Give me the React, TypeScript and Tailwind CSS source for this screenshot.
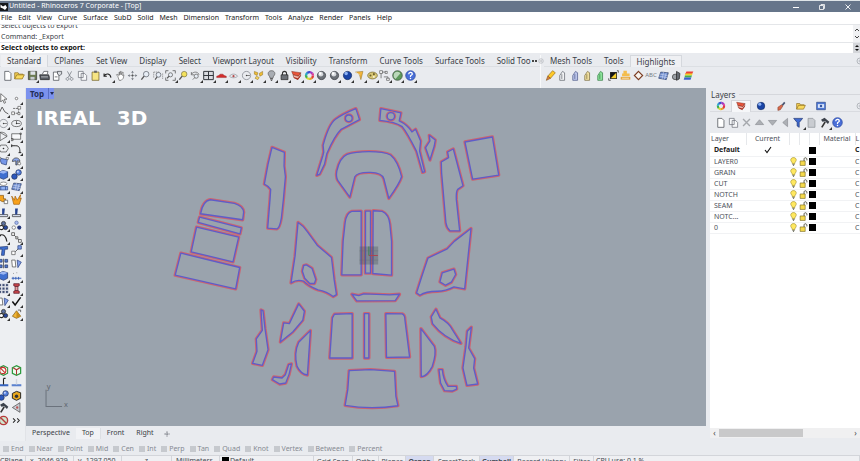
import React, { useState } from 'react';

const ink = '#3d4148';
const blue = '#3f6fd0';

const icons: Record<string, React.ReactNode> = {
    page: <path d="M4 2h6l3 3v10H4z" fill="#fff" stroke={ink} />,
    folder: <><path d="M1 13V4h5l1 2h6v3" fill="#f3cf55" stroke="#8a6a1c" /><path d="M1 13l3-6h11l-3 6z" fill="#f8d95e" stroke="#8a6a1c" /></>,
    save: <><path d="M2 2h12v12H2z" fill="#6c7b52" stroke="#333" /><path d="M5 2h7v5H5z" fill="#dfe3e8" /><path d="M5 10h6v4H5z" fill="#c7cbd0" /></>,
    print: <><path d="M5 6l2-4h6l-1 4" fill="#fff" stroke={ink} /><path d="M1 7h13l1 3v4H2z" fill="#555b63" stroke="#222" /><path d="M3 10h10" stroke="#ddd" /></>,
    notes: <><path d="M2 3h8v12H2z" fill="#fff" stroke={ink} /><path d="M8 2h6v4l-3 2-3-2z" fill="#d8dbe0" stroke={ink} /><path d="M4 10h4" stroke={ink} /></>,
    cut: <path d="M5 2l5 9M11 2l-5 9M5 11a2 2 0 1 0 .1 0M11 11a2 2 0 1 0 .1 0" fill="none" stroke="#6b7078" />,
    copy: <path d="M2 2h7v9H2zM6 5h5l3 3v7H6z" fill="#f7f8fa" stroke="#666b73" />,
    paste: <><path d="M3 3h10v12H3z" fill="#f6e584" stroke="#6a5a20" /><path d="M6 1h4v3H6z" fill="#666" /></>,
    undo: <path d="M3 5v4h4M3 9c3-5 9-4 10 2" fill="none" stroke="#222" strokeWidth="1.6" />,
    hand: <path d="M4 9L2 7l1-1 3 2V3h1v4l1-5h1v5l2-4 1 .5L11 8l2-1-1 5-3 3H6z" fill="#fff" stroke="#555" strokeWidth=".9" />,
    orbit: <><path d="M8 2v12M2 8h12" stroke="#a5a9af" /><path d="M6 4l2-3 2 3M6 12l2 3 2-3M4 6L1 8l3 2M12 6l3 2-3 2" fill="#777c84" /><circle cx="8" cy="8" r="1.5" fill="#555" /></>,
    zoom: <><circle cx="9" cy="6" r="4" fill="#e7edf5" stroke="#555b63" /><path d="M6 9l-4 5" stroke="#555" strokeWidth="2" /></>,
    zoomWin: <><path d="M1 3h9M1 3v9M14 5v8" stroke="#777" strokeDasharray="2 1" /><circle cx="8" cy="7" r="3.5" fill="#e7edf5" stroke="#555b63" /><path d="M6 10l-3 4" stroke="#555" strokeWidth="1.6" /></>,
    zoomExt: <><path d="M1 5V1h4M11 1h4v4M15 11v4h-4M5 15H1v-4" fill="none" stroke="#444" /><circle cx="8" cy="7" r="3" fill="#e7edf5" stroke="#555" /><path d="M6 9l-3 3" stroke="#555" strokeWidth="1.6" /></>,
    zoomSel: <><circle cx="9" cy="6" r="4" fill="#f4e25d" stroke="#777040" /><path d="M6 9l-4 5" stroke="#555" strokeWidth="2" /></>,
    zoomBack: <><path d="M2 3v4h4M2 6c3-4 10-4 11 1" fill="none" stroke="#555" /><circle cx="9" cy="9" r="3" fill="#e7edf5" stroke="#555" /><path d="M7 11l-3 3" stroke="#555" /></>,
    grid: <path d="M1 2h14v12H1zM8 2v12M1 8h14" fill="#d9dce1" stroke="#2e3238" strokeWidth="1.4" />,
    car: <path d="M1 9l3-1 2-2h4l2 2 3 1v2H1z" fill="#d22c2c" stroke="#8d1f1f" strokeWidth=".6" />,
    target: <><path d="M2 9c3-4 9-4 12 0-3 3-9 3-12 0z" fill="none" stroke="#8a8f97" /><circle cx="8" cy="9" r="1.6" fill="#b34b4b" /></>,
    circle: <><circle cx="8" cy="8" r="6" fill="none" stroke="#777c84" /><path d="M8 8h5" stroke="#555" /><circle cx="8" cy="8" r="1" fill="#444" /></>,
    objects: <><path d="M2 2l5 2-1 4-4-2zM9 5l5-3v5l-4 2z" fill="#eebd36" stroke="#8a6a1c" strokeWidth=".7" /><path d="M5 9l4 2-2 3-4-2z" fill="#f4d561" stroke="#8a6a1c" strokeWidth=".7" /></>,
    bulb: <><path d="M5 9C1 5 4 1 8 1s7 4 3 8l-1 3H6z" fill="#a9adb3" stroke="#555" /><path d="M6 13h4M7 15h2" stroke="#333" strokeWidth="1.4" /></>,
    bulbOn: <><path d="M5 9C1 5 4 1 8 1s7 4 3 8l-1 3H6z" fill="#ffe860" stroke="#93821e" /><path d="M6 13h4M7 15h2" stroke="#554" strokeWidth="1.4" /></>,
    lock: <><path d="M5 8V5c0-4 6-4 6 0v3" fill="none" stroke="#333" strokeWidth="1.5" /><path d="M3 7h10v7H3z" fill="#6c7178" stroke="#222" /></>,
    unlock: <><path d="M9 8V4c0-4 5-3 5 0v2" fill="none" stroke="#3c3c2a" strokeWidth="1.5" /><path d="M2 7h9v8H2z" fill="#f5d94c" stroke="#6b5c17" /></>,
    layers: <><path d="M1 2l13 2-3 5-8-2z" fill="#e8543a" stroke="#7d2a1e" strokeWidth=".7" /><path d="M3 7l8 2 3-5v4l-4 6-6-3z" fill="#f3b5a8" stroke="#7d2a1e" strokeWidth=".8" /><path d="M4 10l6 2 4-5v2l-4 5-5-2z" fill="#a82e20" /></>,
    sphere: <><circle cx="8" cy="8" r="6" fill="#6b7077" stroke="#34383d" /><circle cx="7" cy="6" r="3.5" fill="#d6d9dd" /><circle cx="6" cy="5" r="1.8" fill="#fff" /></>,
    blueSphere: <><circle cx="8" cy="8" r="6" fill="#1944a6" stroke="#122a60" /><circle cx="6" cy="5" r="2.5" fill="#8cb2f4" /></>,
    cone: <><path d="M2 3l11-1-3 12-2-7z" fill="#f2b43c" stroke="#8a6a1c" strokeWidth=".7" /><path d="M2 3l6 4" stroke="#fff" /></>,
    gears: <><ellipse cx="8" cy="8" rx="7" ry="5" fill="#d9c876" stroke="#6f602a" /><circle cx="5" cy="8" r="1.5" fill="#6f602a" /><circle cx="10" cy="6" r="1.5" fill="#6f602a" /><circle cx="10" cy="10" r="1.2" fill="#fff" /></>,
    points: <><path d="M3 12V3h7M7 10h6v4" fill="none" stroke="#555" /><path d="M1 1h4v4H1zM9 2h3v3H9zM11 12h4v3h-4z" fill="#fff" stroke="#333" strokeWidth=".8" /></>,
    greenBall: <><circle cx="8" cy="8" r="7" fill="#5f9a5b" stroke="#3b4b3d" /><path d="M3 5c4-4 8-2 9 0L5 13C2 11 2 8 3 5z" fill="#bcd8ba" /></>,
    help: <><circle cx="8" cy="8" r="7" fill="#4a6fd8" stroke="#27459c" /><path d="M5.5 6c0-4 6-3 5 .5L8 8.500V10" fill="none" stroke="#fff" strokeWidth="1.8" /><circle cx="8" cy="12.5" r="1.1" fill="#fff" /></>,
    pencil: <><path d="M4 9l7-8 4 3-7 8z" fill="#ffc928" stroke="#99701a" /><path d="M4 9l4 3-6 3z" fill="#e8863a" stroke="#87551e" /></>,
    cutGrey: <path d="M4 15V8l4-6 3 2v11zM7 6v7" fill="#f1f2f4" stroke="#5a5f67" />,
    cutBlue: <path d="M4 15V8l4-6 3 2v11zM7 6v7" fill="#bcc6ea" stroke="#4a5688" />,
    cutGold: <path d="M4 15V8l4-6 3 2v11zM7 6v7" fill="#f0dfa0" stroke="#75683a" />,
    cutGreen: <path d="M4 15V8l4-6 3 2v11zM7 6v7" fill="#8be29a" stroke="#2f7b3f" />,
    contrast: <><path d="M3 3h10v10H3z" fill="#151515" /><path d="M12 4v8H4z" fill="#f6cf2c" /><path d="M13 1h2v3M1 12v3h3" fill="none" stroke="#333" /></>,
    stamp: <><path d="M5 1h5v4h4v4H3V5h2z" fill="#f4bd4d" /><path d="M1 10h14v4H1z" fill="#e5a63f" /><path d="M3 12h10" stroke="#fff2cd" /></>,
    diamond: <path d="M8 2l6 6-6 6-6-6z" fill="#f8f4ef" stroke="#7c3d22" strokeWidth="1.7" />,
    mesh: <><path d="M4 3l11 1-3 10-11-2z" fill="#6c8bce" stroke="#34456e" /><path d="M8 3L6 13M12 4L9 14M3 6l11 2M2 9l11 2" stroke="#d4def5" strokeWidth=".8" /></>,
    cluster: <><circle cx="6" cy="10" r="4" fill="#9a9fa5" stroke="#333" /><path d="M8 2l5 3-1 8-4 2z" fill="#666b72" stroke="#222" /></>,
    rainbow: <><path d="M5 2h10l-2 4H3z" fill="#ee4136" /><path d="M4 5h10l-1 3H2z" fill="#f4d22e" /><path d="M3 8h10l-1 3H2z" fill="#45b14e" /><path d="M2 11h10l-1 3H1z" fill="#3c60cf" /></>,
    arrow: <path d="M4 1v12l3-3 2 5 2-1-2-5h4z" fill="#fff" stroke="#444" />,
    dot: <circle cx="8" cy="8" r="1.8" fill="#fff" stroke="#555" />,
    polyline: <path d="M1 13L6 3l4 7 5 3" fill="none" stroke="#444" strokeWidth="1.2" />,
    curve: <><path d="M3 12h8V5M3 5h8" fill="none" stroke="#444" strokeDasharray="3 1" /><path d="M1 10h4v4H1zM10 2h4v4h-4zM10 11h3v3h-3z" fill="#fff" stroke="#333" strokeWidth=".8" /></>,
    ellipse: <><ellipse cx="8" cy="8" rx="7" ry="4.5" fill="none" stroke="#444" /><path d="M8 4v4h5" fill="none" stroke="#444" /><circle cx="8" cy="8" r="1" fill="#333" /></>,
    arc: <path d="M3 2l10 6-10 6zM3 2c5-1 10 2 10 6" fill="none" stroke="#444" />,
    rect: <path d="M1 4h13v8H1zM0 11h3v3H0zM13 3h2v2h-2z" fill="#f8f9fb" stroke="#444" />,
    hexagon: <><path d="M4 3h8l3 5-3 5H4L1 8z" fill="none" stroke="#444" /><circle cx="8" cy="8" r="1.2" fill="#333" /></>,
    fillet: <path d="M1 4h6c5 0 6 3 6 10M1 2v4M11 14h4" fill="none" stroke="#222" strokeWidth="1.4" />,
    patch: <><path d="M2 3l10 2 2-2-2 10-7-2z" fill="#7697e8" stroke="#263a72" /><path d="M1 2h3v3H1zM12 2h3v3h-3z" fill="#fff" stroke="#333" strokeWidth=".7" /></>,
    dome: <><path d="M2 8c0-7 11-7 11 0l-4-1v6H7V7z" fill="#8aa6ec" stroke="#333" /><circle cx="12" cy="11" r="2" fill="#fff" stroke="#555" /></>,
    box: <><path d="M1 5l6-3 7 2v8l-6 3-7-3z" fill={blue} stroke="#1e3166" /><path d="M1 5l7 2 6-3-7-2z" fill="#9bb6f3" /></>,
    balls: <><circle cx="5" cy="11" r="4" fill="#2d58bd" stroke="#1b2d5b" /><circle cx="11" cy="5" r="4" fill="#5580df" stroke="#1b2d5b" /><circle cx="10" cy="4" r="1.5" fill="#c5d5fa" /></>,
    extrude: <><ellipse cx="8" cy="4" rx="5" ry="2.5" fill="#fff" stroke="#666" /><path d="M1 8h13v5H1z" fill="#8fb2f4" stroke="#2c4788" /><path d="M4 8v5M11 8v5" stroke="#2c4788" /></>,
    puzzle: <><path d="M2 2h6v5h3v4H6L1 8z" fill="#f6a41f" stroke="#84550c" /><path d="M9 9h5v5H9z" fill="#fff" stroke="#555" /></>,
    flame: <path d="M1 3l4 6 1-6 3 6 5-8-1 6 2-1-3 9H4z" fill="#f8a11c" stroke="#a5610a" />,
    trim: <><path d="M2 11h12v3H2z" fill="#dbe2f3" stroke="#333" /><path d="M6 2h4l-1 9H6z" fill="#27448f" /></>,
    group: <><circle cx="5" cy="11" r="3" fill="#fff" stroke="#222" strokeWidth="1.5" /><circle cx="11" cy="11" r="3" fill="#28479c" stroke="#222" /><circle cx="8" cy="5" r="3" fill="#5d719e" stroke="#222" /></>,
    dots3: <><circle cx="8" cy="4" r="2.5" fill="#a7baf0" stroke="#5b6da3" /><circle cx="4" cy="11" r="2.5" fill="#fff" stroke="#666" /><circle cx="12" cy="11" r="3" fill="#23367c" /></>,
    bend: <path d="M2 5c6-3 10 2 11 9M1 3l3 3" fill="none" stroke="#222" strokeWidth="1.6" />,
    nodes: <><path d="M3 3l9 9" stroke="#333" /><path d="M1 1h4v4H1zM7 7h3v3H7zM11 11h4v4h-4z" fill="#fff" stroke="#333" /></>,
    text: <path d="M2 3l12-1v4h-4l-1 9H5l1-9H2z" fill={blue} stroke="#21376f" />,
    move: <><path d="M6 10l5-5" stroke="#333" /><path d="M1 9h5v5H1z" fill="#fff" stroke="#555" /><path d="M10 1h5v5h-5z" fill="#7e9ce6" stroke="#26407f" /></>,
    array: <><path d="M2 2h4v4H2zM10 2h4v4h-4zM2 10h4v4H2zM10 10h4v4h-4z" fill="#5379cf" stroke="#223462" /><path d="M8 1v14" stroke="#333" /></>,
    mirror: <><path d="M1 3h5l1 10H2z" fill="#fff" stroke="#444" /><path d="M9 3l6 3-5 8z" fill="#7f9ee8" stroke="#2b4280" /></>,
    ruler: <><path d="M1 12h14M3 10v4M7 10v4M11 10v4" stroke="#3760b8" strokeWidth="1.4" /><path d="M3 5h1M8 4h1" stroke="#555" /></>,
    matrix: <path d="M1 1h4v4H1zM6 1h4v4H6zM11 1h4v4h-4zM1 6h4v4H1zM6 6h4v4H6zM11 6h4v4h-4zM1 11h4v4H1zM6 11h4v4H6zM11 11h4v4h-4z" fill="#3b4a70" stroke="#fff" strokeWidth=".7" />,
    spool: <><path d="M4 1h8v3l-2 1H6L4 4zM4 15h8v-3l-2-1H6l-2 1z" fill="#c9474b" stroke="#512" /><path d="M6 5h4v6H6z" fill="#e6a7a7" stroke="#512" /></>,
    check: <path d="M2 8l4 5 8-11" fill="none" stroke="#111" strokeWidth="2.2" />,
    pyramid: <><path d="M2 12l6-8 6 8-6 3z" fill="#f1b638" stroke="#77530d" /><path d="M8 4l6 8-6 3z" fill="#c98c18" /><path d="M10 3h4v3" fill="none" stroke="#333" /></>,
    cubeRed: <><path d="M2 4l6-3 6 3v8l-6 3-6-3z" fill="#f4fff4" stroke="#2d8f3c" strokeWidth="1.5" /><circle cx="7" cy="8" r="4.5" fill="none" stroke="#c72f2f" strokeWidth="1.6" /><path d="M4 5l6 6" stroke="#c72f2f" strokeWidth="1.6" /></>,
    cubeGreen: <><path d="M2 4l6-3 6 3v8l-6 3-6-3z" fill="#eefaee" stroke="#2d9a3f" strokeWidth="1.8" /><path d="M3 4l5 3 5-3M8 7v7" fill="none" stroke="#a33" strokeWidth="1.5" /></>,
    slab: <><path d="M1 12h14" stroke="#3764c0" strokeWidth="3" /><path d="M8 2v9M8 2h3" fill="none" stroke="#222" strokeWidth="1.6" /></>,
    slabPale: <><path d="M1 12h14" stroke="#5c82cf" strokeWidth="3" /><path d="M7 3h2v8H7z" fill="#cfd5df" /></>,
    goldBox: <><path d="M2 5l6-3 6 2v8l-6 3-6-3z" fill="#e9a81f" stroke="#222" strokeWidth="1.4" /><circle cx="8" cy="9" r="2.5" fill="#333" /></>,
    prev: <><path d="M13 1v14L2 8z" fill="#c8ccd3" stroke="#444" /><circle cx="9" cy="8" r="1.7" fill="#b55" /></>,
    noEntry: <><circle cx="8" cy="8" r="6" fill="#cfe6cf" stroke="#b63b3b" strokeWidth="2" /><path d="M4 4l8 8" stroke="#b63b3b" strokeWidth="2" /></>,
    brush: <><path d="M9 6l4-5 2 2-4 5z" fill="#4a5570" /><path d="M3 10l6-4 2 2-4 6-4 1z" fill="#d86a4c" stroke="#7c3b2a" strokeWidth=".8" /></>,
    display: <><path d="M1 2h14v12H1z" fill="#4d78d6" stroke="#26427f" /><path d="M3 5h10v6H3z" fill="#dbe6fb" /><circle cx="8" cy="8" r="2" fill="#35569f" /></>,
    cross: <path d="M3 3l10 10M13 3L3 13" stroke="#a5a8ad" strokeWidth="2" />,
    up: <path d="M2 11h12L8 4z" fill="#adb0b5" stroke="#8c8f94" />,
    down: <path d="M2 5h12l-6 7z" fill="#adb0b5" stroke="#8c8f94" />,
    left: <path d="M11 2v12L4 8z" fill="#adb0b5" stroke="#8c8f94" />,
    filter: <path d="M1 2h13L9 8v7l-3-2V8z" fill="#3f6ad0" stroke="#1e3473" />,
    pageGrey: <path d="M3 2h7l3 3v10H3z" fill="#c9ccd1" stroke="#8b8f95" />,
    hammer: <><path d="M4 15l5-8" stroke="#333" strokeWidth="2.4" /><path d="M3 4l5-3 7 6-2 3-4-4-4 1z" fill="#3c424b" /></>,
    gear: <><circle cx="8" cy="8" r="6" fill="none" stroke="#aeb2b8" strokeWidth="1.8" /><circle cx="8" cy="8" r="2" fill="none" stroke="#aeb2b8" strokeWidth="1.5" /></>,
    plus: <path d="M8 1v14M1 8h14" stroke="#6d727a" strokeWidth="2.4" strokeDasharray="5 1" />,
    more: <path d="M3 5l3 3-3 3M9 5l3 3-3 3" fill="none" stroke="#222" strokeWidth="1.5" />,
};

interface IconProps {
    name: string;
    className?: string;
}

const Icon: React.FC<IconProps> = ({ name, className = 'size-[11px]' }) => {
    if (name === 'wheel') {
        return (
            <svg viewBox="0 0 16 16" className={className} aria-hidden="true">
                {['#e23c3c', '#e99b2c', '#d9d936', '#3fb04a', '#2fa7c9', '#3a4fd0', '#a03cc4', '#dd3c94'].map((color, i) => (
                    <circle key={color} cx="8" cy="8" r="5" fill="none" stroke={color} strokeWidth="3.4" strokeDasharray="4.2 40" strokeDashoffset={-i * 3.93} />
                ))}
            </svg>
        );
    }
    return (
        <svg viewBox="0 0 16 16" className={className} aria-hidden="true">
            {icons[name]}
        </svg>
    );
};

interface ToolProps {
    name: string;
    flyout?: boolean;
}

const Tool: React.FC<ToolProps> = ({ name, flyout }) => (
    <button type="button" aria-label={name} className="relative size-3 shrink-0 flex items-center justify-center">
        <Icon name={name} />
        {flyout && (
            <svg viewBox="0 0 3 3" className="absolute -right-px -bottom-px size-[3px]" aria-hidden="true">
                <path d="M3 0v3H0z" fill="#333" />
            </svg>
        )}
    </button>
);

const menus = ['File', 'Edit', 'View', 'Curve', 'Surface', 'SubD', 'Solid', 'Mesh', 'Dimension', 'Transform', 'Tools', 'Analyze', 'Render', 'Panels', 'Help'];
const toolTabs = ['Standard', 'CPlanes', 'Set View', 'Display', 'Select', 'Viewport Layout', 'Visibility', 'Transform', 'Curve Tools', 'Surface Tools', 'Solid Too'];
const sideTabs = ['Mesh Tools', 'Tools', 'Highlights'];

const standardTools = ['page', 'folder', 'save+', 'print', 'notes', 'cut', 'copy', 'paste', 'undo+', 'hand', 'orbit', 'zoom', 'zoomWin', 'zoomExt+', 'zoomSel', 'zoomBack+', 'grid+', 'car+', 'target+', 'circle+', 'objects+', 'bulb+', 'lock+', 'layers+', 'wheel+', 'sphere', 'sphere+', 'blueSphere+', 'cone+', 'gears+', 'points+', 'greenBall+', 'help+'];
const sideTools = ['pencil', 'cutGrey', 'cutBlue', 'cutGold', 'cutGreen', 'contrast', 'stamp', 'diamond', 'ABC', 'mesh', 'cluster', 'rainbow'];

const leftTools = [
    ['arrow', 'dot+'], ['polyline+', 'curve+'], ['circle+', 'ellipse+'], ['arc+', 'rect+'], ['hexagon+', 'fillet+'], ['patch+', 'dome+'],
    ['box+', 'balls+'], ['extrude+', 'mesh+'], ['puzzle', 'flame'], ['trim+', 'trim'], ['group+', 'dots3'], ['bend+', 'nodes+'],
    ['text', 'move+'], ['array', 'mirror'], ['box+', 'ruler+'], ['matrix+', 'spool+'], ['mirror+', 'check+'], ['group+', 'pyramid+'],
];
const leftBottomTools = [['cubeRed', 'cubeGreen'], ['slab', 'slabPale'], ['balls', 'goldBox'], ['hammer', 'prev'], ['noEntry', 'more']];

const layers = ['Default', 'LAYER0', 'GRAIN', 'CUT', 'NOTCH', 'SEAM', 'NOTC...', '0'];
const snaps = ['End', 'Near', 'Point', 'Mid', 'Cen', 'Int', 'Perp', 'Tan', 'Quad', 'Knot', 'Vertex', 'Between', 'Percent'];

// Pattern pieces, three drawing units per screen pixel
const pieces = [
    {
        at: 'translate(402 3)',
        paths: [
            'M121 373C126 345 136 333 150 331L222 342Q248 350 250 368L247 391Z',
            'M118 383L243 415L239 433L114 399Z',
            'M109 413L235 443L218 517L93 487Z',
            'M62 491L238 534L226 598L45 557Z',
            'M335 174L372 189L371 230L375 262L369 330L363 385Q358 415 350 418L322 416L329 330L331 300Q322 288 312 284L323 225Z',
            'M413 399Q428 408 440 426L470 467L513 504L521 570L528 615L518 621Q500 606 473 601Q445 590 430 575Q410 568 392 580L404 500Z',
            'M430 528L438 526L455 537L466 570L462 582L448 582L433 566L426 545Z',
        ],
    },
    {
        at: 'translate(852 3)',
        paths: [
            'M136 58L147 91L92 120Q72 140 49 193L42 225L28 254L19 258L37 200L40 188L38 168Q55 105 75 90Q95 75 136 58Z',
            'M105 87a10 10 0 1 0 20 0a10 10 0 1 0-20 0Z',
            'M211 58L271 71L266 95Q290 106 304 128L315 120L330 155L327 185L342 247L336 249L318 186Q290 130 275 112Q255 97 208 93Z',
            'M230 81a11 11 0 1 0 22 0a11 11 0 1 0-22 0Z',
            'M356 138L374 152L371 170L358 212L345 175L358 155Z',
            'M428 179L457 289L441 300Q436 306 437 330L447 424L418 424Q408 415 406 400L393 250L392 218L414 205L411 188Z',
            'M463 158L545 143L564 257L486 269Z',
            'M110 195Q135 187 175 187Q220 187 240 197Q262 215 273 262Q268 280 235 327L220 268Q215 250 180 249Q140 248 133 262L118 323L82 273Q76 262 79 245Q88 205 110 195Z',
        ],
    },
    {
        at: 'translate(852 333)',
        paths: [
            'M124 36L152 35L152 226L94 226L98 125L104 70Q108 40 124 36Z',
            'M165 35L180 35L180 221L165 221Z',
            'M188 34L215 36Q235 45 238 75L243 125L243 227L187 222Z',
            'M124 284L145 288L160 283L237 286L267 284L254 303L139 304Z',
            'M481 87L462 268L430 262Q405 275 380 275Q345 275 328 287L318 280Q332 235 352 176L410 148L432 125Z',
            'M395 220L430 209L435 225L422 248L405 257L388 247Z',
        ],
    },
    {
        at: 'translate(612 603)',
        paths: [
            'M92 61L98 64L104 118L113 180L96 227L67 221L80 185L78 148L96 122Z',
            'M205 43L222 65L217 92L187 127L150 157L160 100L177 102Z',
            'M240 123L231 256Q212 254 200 230Q190 190 205 158Z',
            'M183 223Q178 255 166 280L148 283L126 270L130 262L155 265L165 255L175 225Z',
            'M312 74L365 72L365 205L298 205L306 85Z',
            'M402 72L415 72L415 205L402 205Z',
            'M466 72L515 73Q523 76 523 90L537 202L468 203Z',
            'M356 243L420 240L492 245L496 320L502 348Q420 360 344 347L352 300Z',
            'M616 59L628 85Q655 100 665 120L691 161Q640 145 606 102L602 82Z',
            'M571 117L611 170Q618 190 605 230Q590 260 572 261Z',
            'M722 113L714 175L732 207L729 235L741 283L709 287L697 235L706 170L710 125Z',
            'M625 240L635 240Q638 270 652 290L677 290L678 298L665 304L642 303L630 280Z',
        ],
    },
];

const renderTool = (entry: string, key: React.Key) => {
    if (entry === 'ABC') {
        return <button type="button" key={key} className="w-3 shrink-0 flex justify-center text-[6px] text-[#777c84]">ABC</button>;
    }
    return <Tool key={key} name={entry.replace('+', '')} flyout={entry.endsWith('+')} />;
};

const Viewport: React.FC = () => (
    <div className="relative flex-1 min-h-0 bg-[#9aa3ad] overflow-hidden">
        <svg viewBox="0 0 2037 1011" className="block size-full" aria-label="Flattened seat pattern">
            {pieces.map(group => (
                <g key={group.at} transform={group.at} strokeLinejoin="round">
                    {group.paths.map(d => (
                        <g key={d}>
                            <path d={d} fill="none" stroke="#cb6470" strokeWidth="10" />
                            <path d={d} fill="#9aa3ad" stroke="#5f5dc8" strokeWidth="4" />
                        </g>
                    ))}
                </g>
            ))}
            <g transform="translate(852 333)">
                <path d="M147 141h56v54h-56z" fill="#4b4f58" opacity=".35" />
                <path d="M147 154h56M147 182h56M161 141v54M189 141v54" stroke="#5f6670" strokeWidth="2" opacity=".4" />
                <path d="M175 168h27" stroke="#a84652" strokeWidth="3" />
                <path d="M175 141v27" stroke="#3f7f56" strokeWidth="3" />
            </g>
            <path d="M60 903v50h48" fill="none" stroke="#6b727c" strokeWidth="3" />
            <text x="62" y="902" className="text-[22px] fill-[#5f6670]">y</text>
            <text x="114" y="956" className="text-[22px] fill-[#5f6670]">x</text>
        </svg>
        <button type="button" className="absolute left-0 top-0 h-[11px] flex items-center bg-[#7b92ee] text-[8px] font-bold text-[#222c55]">
            <span className="px-1">Top</span>
            <span className="h-full w-[6px] flex items-center justify-center border-l border-[#5a6fc4]">
                <svg viewBox="0 0 4 3" className="w-1 h-[3px]" aria-hidden="true"><path d="M0 0h4L2 3z" fill="#222c55" /></svg>
            </span>
        </button>
        <div className="absolute left-[10px] top-5 flex gap-4 font-['DejaVu_Sans',sans-serif] text-[20px] leading-5 font-bold text-white">
            <span>IREAL</span>
            <span>3D</span>
        </div>
    </div>
);

const LayersPanel: React.FC = () => {
    const [current, setCurrent] = useState('Default');

    return (
        <section className="w-[154px] shrink-0 pl-1 pt-px pb-[3px] flex flex-col">
            <div className="h-[11px] flex items-center gap-1 pl-px">
                <h2 className="text-[8px]">Layers</h2>
                <span className="flex-1 border-t border-[#d5d7dc]"></span>
            </div>
            <div className="h-3 flex items-center pl-px border-b border-[#d9dbe0]">
                {['wheel', 'layers', 'blueSphere', 'brush', 'folder', 'display'].map(name => (
                    <button type="button" key={name} aria-label={name} className={`w-5 h-3 shrink-0 flex items-center justify-center ${name === 'layers' ? 'bg-[#f6f7f9] border-x border-t border-[#d5d7dc]' : ''}`}>
                        <Icon name={name} className="size-[10px]" />
                    </button>
                ))}
                <button type="button" aria-label="Panel options" className="ml-auto -mr-1"><Icon name="gear" className="size-2" /></button>
            </div>
            <div className="h-[21px] shrink-0 w-[134px] pl-1 flex items-center justify-between">
                {['page', 'copy', 'cross', 'up', 'down', 'left', 'filter+', 'pageGrey', 'hammer+', 'help'].map(renderTool)}
            </div>
            <div className="flex-1 min-h-0 bg-white overflow-hidden">
                <table className="w-full table-fixed border-collapse text-[7px] leading-[10px]">
                    <colgroup>
                        <col className="w-9" />
                        <col className="w-[43px]" />
                        <col className="w-[10px]" />
                        <col className="w-[10px]" />
                        <col className="w-[10px]" />
                        <col className="w-9" />
                        <col />
                    </colgroup>
                    <thead>
                        <tr className="h-3 text-[#4d5159]">
                            <th scope="col" className="font-normal text-left pl-px border-r border-[#e6e8eb]">Layer</th>
                            <th scope="col" className="font-normal border-r border-[#e6e8eb]">Current</th>
                            <th scope="col" aria-label="On" className="border-r border-[#e6e8eb]"></th>
                            <th scope="col" aria-label="Locked" className="border-r border-[#e6e8eb]"></th>
                            <th scope="col" aria-label="Color" className="border-r border-[#e6e8eb]"></th>
                            <th scope="col" className="font-normal border-r border-[#e6e8eb]">Material</th>
                            <th scope="col" className="font-normal text-left">L</th>
                        </tr>
                    </thead>
                    <tbody>
                        {layers.map(layer => (
                            <tr key={layer} onClick={() => setCurrent(layer)} className={`h-[11px] border-b border-[#f1f2f4] ${layer === current ? 'font-bold text-[#222]' : 'text-[#4d5159]'}`}>
                                <td className="pl-1 whitespace-nowrap">{layer}</td>
                                <td>{layer === current && <Icon name="check" className="size-2 mx-auto" />}</td>
                                <td>{layer !== current && <Icon name="bulbOn" className="size-[9px]" />}</td>
                                <td>{layer !== current && <Icon name="unlock" className="size-[9px]" />}</td>
                                <td><span className="block size-[7px] bg-black"></span></td>
                                <td></td>
                                <td>C</td>
                            </tr>
                        ))}
                    </tbody>
                </table>
            </div>
            <div className="h-[10px] shrink-0 flex items-center bg-[#f0f0f1] text-[8px] leading-[8px] text-[#444]">
                <button type="button" aria-label="Scroll left" className="w-[9px]">‹</button>
                <div className="flex-1 h-2">
                    <div className="h-full w-[64%] bg-[#c9c9ca]"></div>
                </div>
                <button type="button" aria-label="Scroll right" className="w-[9px]">›</button>
            </div>
        </section>
    );
};

const StatusBar: React.FC = () => (
    <footer className="h-[6px] shrink-0 overflow-hidden border-t border-[#d3d5da] bg-[#eff0f3]">
        <div className="flex h-3 text-[7px] leading-[10px] text-[#444850] whitespace-nowrap *:border-r *:border-[#d3d5da] *:shrink-0">
            <span className="w-[26px]">CPlane</span>
            <span className="w-12 pl-1">x -2046.929</span>
            <span className="w-12 pl-1">y -1297.050</span>
            <span className="w-[50px] text-center">z</span>
            <span className="w-12 pl-1">Millimeters</span>
            <span className="w-[94px] pl-[2px] flex gap-px"><span className="size-[7px] mt-px bg-black"></span>Default</span>
            <button type="button" className="w-[39px]">Grid Snap</button>
            <button type="button" className="w-[26px]">Ortho</button>
            <button type="button" className="w-[27px]">Planar</button>
            <button type="button" className="w-7 font-bold bg-[#d5daf0]">Osnap</button>
            <button type="button" className="w-[46px]">SmartTrack</button>
            <button type="button" className="w-[34px] font-bold bg-[#d5daf0]">Gumball</button>
            <button type="button" className="w-14">Record History</button>
            <button type="button" className="w-6">Filter</button>
            <span className="flex-1 pl-[2px]">CPU use: 0.1 %</span>
        </div>
    </footer>
);

const App: React.FC = () => {
    const [view, setView] = useState('Top');
    const [tab, setTab] = useState('Standard');
    const [sideTab, setSideTab] = useState('Highlights');

    return (
        <div className="h-screen flex flex-col overflow-hidden bg-[#e9ebef] font-['Noto_Sans',sans-serif] text-[#3a3e46]">
            {/* Title bar */}
            <header className="h-3 shrink-0 flex items-center bg-[#66758a] border-t border-[#dfe5e8] text-white">
                <svg viewBox="0 0 16 16" className="size-2 mr-px" aria-hidden="true">
                    <path d="M0 0h16v16H0z" fill="#15181c" />
                    <path d="M1 3l5 4 5-3 3 5-4 5-4-3-5-2z" fill="#fff" />
                </svg>
                <h1 className="text-[7px]">Untitled - Rhinoceros 7 Corporate - [Top]</h1>
                <div className="ml-auto flex items-center gap-[20px] pr-[9px]">
                    <button type="button" aria-label="Minimize"><svg viewBox="0 0 6 6" className="size-[6px]"><path d="M0 3.500h6" stroke="#fff" /></svg></button>
                    <button type="button" aria-label="Restore"><svg viewBox="0 0 6 6" className="size-[6px]"><path d="M.5 1.500h4v4h-4zM2 1.500v-1h3.500v4h-1" fill="none" stroke="#fff" strokeWidth=".8" /></svg></button>
                    <button type="button" aria-label="Close"><svg viewBox="0 0 6 6" className="size-[6px]"><path d="M.5.5l5 5M5.500.5l-5 5" stroke="#fff" strokeWidth=".9" /></svg></button>
                </div>
            </header>

            {/* Menu bar */}
            <nav className="h-[13px] shrink-0 flex items-center gap-[6px] pl-px bg-white border-b border-[#e4e6e9] text-[7px] leading-[10px] text-[#222]">
                {menus.map(menu => <button type="button" key={menu}>{menu}</button>)}
            </nav>

            {/* Command history and prompt */}
            <div className="h-[18px] shrink-0 flex bg-white border-b border-[#e4e6e9]">
                <div className="flex-1 min-h-0 overflow-hidden flex flex-col justify-end pl-px text-[7px] leading-[11px]">
                    <p className="shrink-0">Select objects to export</p>
                    <p className="shrink-0">Command: _Export</p>
                </div>
                <div className="w-[7px] bg-[#f0f1f3] flex flex-col items-center justify-around">
                    <svg viewBox="0 0 4 3" className="w-1 h-[3px]"><path d="M0 3l2-2 2 2" fill="none" stroke="#444" /></svg>
                    <svg viewBox="0 0 4 3" className="w-1 h-[3px]"><path d="M0 0l2 2 2-2" fill="none" stroke="#444" /></svg>
                </div>
            </div>
            <div className="h-[10px] shrink-0 flex bg-white text-[7px] leading-[10px]">
                <label htmlFor="prompt" className="pl-px font-bold text-[#111]">Select objects to export:</label>
                <input id="prompt" type="text" className="flex-1 pl-1 outline-none" />
                <button type="button" aria-label="Command options" className="w-[7px] bg-[#d4d6da] flex flex-col items-center justify-around">
                    <svg viewBox="0 0 4 8" className="w-1 h-2"><path d="M0 3l2-2 2 2zM0 5l2 2 2-2z" fill="#111" /></svg>
                </button>
            </div>

            {/* Tool tabs */}
            <div className="h-[35px] shrink-0 flex pt-[2px] text-[8px]">
                <div className="w-[541px] flex flex-col border-r border-[#f8f9fa]">
                    <div className="h-3 flex items-center pl-px border-b border-[#dcdfe3] whitespace-nowrap">
                        {toolTabs.map(name => (
                            <button type="button" key={name} onClick={() => setTab(name)} className={`h-3 px-[6px] last-of-type:pr-0 ${tab === name ? 'bg-[#eff0f3] border-r border-[#d5d8dd]' : ''}`}>{name}</button>
                        ))}
                        <svg viewBox="0 0 5 2" className="w-[5px] h-[2px] shrink-0 mx-px" aria-hidden="true"><path d="M0 0h2v2H0zM3 0h2v2H3z" fill="#444" /></svg>
                        <Icon name="gear" className="size-[6px] shrink-0" />
                    </div>
                    <div className="flex-1 w-[416px] flex items-center justify-between pl-px pb-1">
                        {standardTools.map(renderTool)}
                    </div>
                </div>
                <div className="flex-1 flex flex-col pl-[3px]">
                    <div className="h-3 flex items-center border-b border-[#dcdfe3]">
                        {sideTabs.map(name => (
                            <button type="button" key={name} onClick={() => setSideTab(name)} className={`h-3 px-[6px] ${sideTab === name ? 'bg-[#eff0f3] border-x border-t border-[#d5d8dd]' : ''}`}>{name}</button>
                        ))}
                        <span className="ml-auto -mr-1"><Icon name="gear" className="size-2" /></span>
                    </div>
                    <div className="flex-1 w-[151px] flex items-center justify-between pb-1">
                        {sideTools.map(renderTool)}
                    </div>
                </div>
            </div>

            {/* Work area */}
            <main className="flex-1 min-h-0 flex">
                <aside className="w-[26px] shrink-0 overflow-hidden flex flex-col justify-between pt-1 pb-[15px] border-r border-[#e1e3e7] bg-[#edeff2]">
                    <div className="h-[228px] -ml-[3px] flex flex-col justify-between">
                        {leftTools.map((row, i) => (
                            <div key={i} className="flex gap-px">{row.map(renderTool)}</div>
                        ))}
                    </div>
                    <div className="h-[62px] -ml-[3px] flex flex-col justify-between">
                        {leftBottomTools.map((row, i) => (
                            <div key={i} className="flex gap-px">{row.map(renderTool)}</div>
                        ))}
                    </div>
                </aside>
                <div className="flex-1 min-w-0 flex flex-col">
                    <Viewport />
                    <div className="h-[15px] shrink-0 flex items-center text-[7px]">
                        {['Perspective', 'Top', 'Front', 'Right'].map(name => (
                            <button type="button" key={name} onClick={() => setView(name)} className={`px-[6px] ${view === name ? 'bg-[#f1f2f5] border-r border-[#dcdfe3]' : ''}`}>{name}</button>
                        ))}
                        <button type="button" aria-label="New layout" className="px-1"><Icon name="plus" className="size-[6px]" /></button>
                    </div>
                </div>
                <LayersPanel />
            </main>

            {/* Object snaps */}
            <div className="h-[14px] shrink-0 flex items-center gap-[5px] pl-[3px] pt-[2px] text-[7px] leading-[10px] text-[#858a92]">
                {snaps.map(snap => (
                    <label key={snap} className="flex items-center gap-[2px]">
                        <input type="checkbox" className="appearance-none size-[6px] bg-[#c6c9ce] checked:bg-[#5d7bd8]" />
                        {snap}
                    </label>
                ))}
            </div>

            <StatusBar />
        </div>
    );
};

export default App;
